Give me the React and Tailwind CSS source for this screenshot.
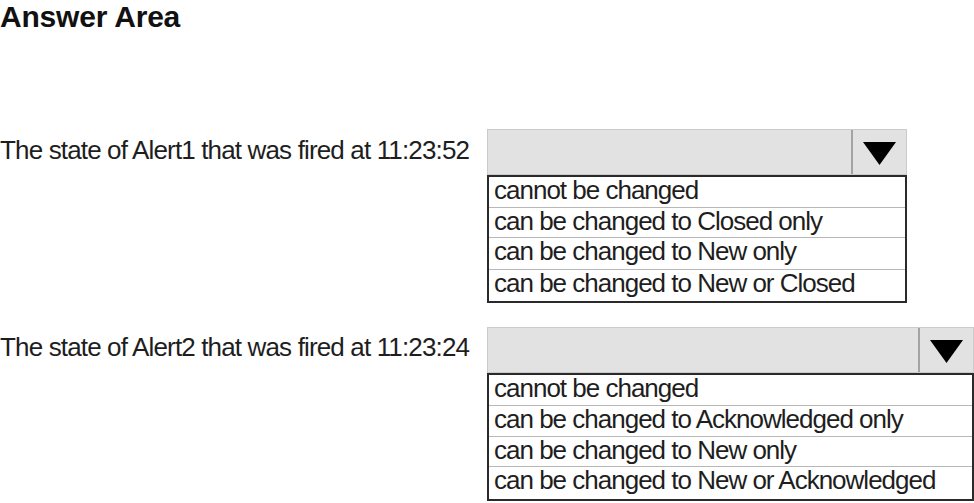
import React from 'react';

const questions = [
  {
    label: 'The state of Alert1 that was fired at 11:23:52',
    width: 'w-[420px]',
    labelPad: 'pt-[8px]',
    options: [
      { text: 'cannot be changed', h: 'h-[31px]' },
      { text: 'can be changed to Closed only', h: 'h-[30px]' },
      { text: 'can be changed to New only', h: 'h-[32px]' },
      { text: 'can be changed to New or Closed', h: 'h-[31px]' },
    ],
  },
  {
    label: 'The state of Alert2 that was fired at 11:23:24',
    width: 'w-[487px]',
    labelPad: 'pt-[7px]',
    options: [
      { text: 'cannot be changed', h: 'h-[31px]' },
      { text: 'can be changed to Acknowledged only', h: 'h-[31px]' },
      { text: 'can be changed to New only', h: 'h-[30px]' },
      { text: 'can be changed to New or Acknowledged', h: 'h-[32px]' },
    ],
  },
];

const Triangle = () => (
  <svg width="33" height="23" viewBox="0 0 33 23">
    <polygon points="0,0 33,0 16.5,23" fill="#000" />
  </svg>
);

const Dropdown = ({ width, options }) => (
  <div className={`${width} flex flex-col tracking-[-1px]`}>
    <div className="h-[46px] flex bg-[#e2e2e2] border border-[#cbcbcb]">
      <div className="flex-1" />
      <div className="w-[55px] border-l-2 border-[#a3a3a3] flex items-center justify-center pt-[3px]">
        <Triangle />
      </div>
    </div>
    <div className="border-2 border-[#2a2a2a] bg-white divide-y divide-[#b8b8b8]">
      {options.map((opt) => (
        <div key={opt.text} className={`${opt.h} pl-[5px] leading-[26px] whitespace-nowrap`}>
          {opt.text}
        </div>
      ))}
    </div>
  </div>
);

export default function App() {
  return (
    <div
      className="w-[974px] h-[503px] bg-white text-[#1e1e1e] overflow-hidden"
      style={{ fontFamily: '"Liberation Sans", Arial, sans-serif' }}
    >
      <h1 className="text-[30px] font-bold leading-[34px] text-[#111] tracking-[-0.2px]">Answer Area</h1>

      <div className="mt-[95px] flex flex-col gap-[24px] text-[26px]">
        {questions.map((q) => (
          <div key={q.label} className="flex items-start">
            <div className={`w-[487px] h-[46px] ${q.labelPad} leading-[26px] tracking-[-0.85px] whitespace-nowrap`}>
              {q.label}
            </div>
            <Dropdown width={q.width} options={q.options} />
          </div>
        ))}
      </div>
    </div>
  );
}
